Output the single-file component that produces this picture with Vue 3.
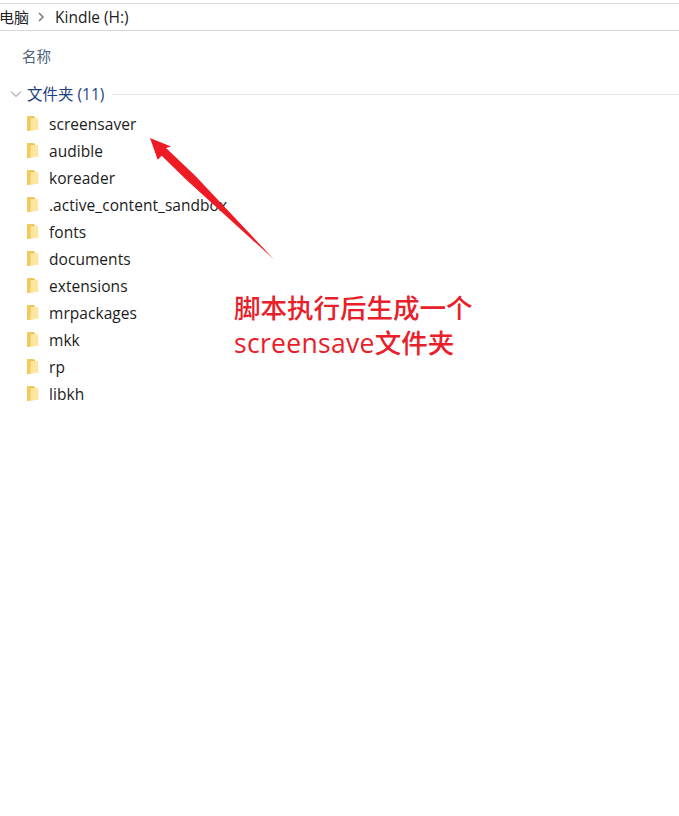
<script setup>
const folders = ['screensaver','audible','koreader','.active_content_sandbox','fonts','documents','extensions','mrpackages','mkk','rp','libkh']
</script>

<template>
  <div class="page">
    <div class="crumbs">
      <span class="pc">电脑</span>
      <svg class="sep" width="8" height="10" viewBox="0 0 8 10"><path d="M2 1l4 4-4 4" fill="none" stroke="#7a7a7a" stroke-width="1.500"/></svg>
      <span>Kindle (H:)</span>
    </div>
    <div class="col">名称</div>
    <div class="group">
      <svg class="chev" width="12" height="8" viewBox="0 0 12 8"><path d="M1 1.5l5 5 5-5" fill="none" stroke="#7f7f7f" stroke-width="1"/></svg>
      <span class="gname">文件夹 (11)</span>
      <span class="gline"></span>
    </div>
    <ul class="list">
      <li v-for="f in folders" :key="f" class="row">
        <svg class="folder" width="14" height="17" viewBox="0 0 14 17">
          <path d="M1 1h6l2 1v13l-8 1z" fill="#efc04e"/>
          <path d="M4.500 3h7.500l.5 12H4z" fill="#fde7a0"/>
          <path d="M1 1h5l1 1H4.500v12.500L1 16z" fill="#f2c95c"/>
        </svg>
        <span>{{ f }}</span>
      </li>
    </ul>
    <svg class="arrow" width="140" height="130" viewBox="0 0 140 130">
      <path d="M3 2L24 10.500 19 12 48 39.500 127 123.500 39 43.500 14.700 19.700 10.700 23.700z" fill="#ed1c24"/>
    </svg>
    <div class="note">脚本执行后生成一个<br><span class="latin">screensave</span>文件夹</div>
  </div>
</template>

<style scoped>
.page {
  position: relative;
  width: 679px;
  height: 816px;
  background: #fff;
  overflow: hidden;
  font-family: "Open Sans", "Noto Sans CJK SC", sans-serif;
  color: #1a1a1a;
}
.crumbs {
  margin-top: 3px;
  border-top: 1px solid #d9d9d9;
  border-bottom: 1px solid #d9d9d9;
  height: 26px;
  display: flex;
  align-items: center;
  font-size: 15.5px;
  line-height: 24px;
  color: #222;
}
.pc { margin-left: -1px; font-size: 15px; }
.sep { margin: 0 10px 0 8px; }
.col {
  margin: 16px 0 0 22px;
  height: 20px;
  line-height: 20px;
  font-size: 14.500px;
  color: #4c607a;
}
.group {
  margin-top: 17px;
  display: flex;
  align-items: center;
  height: 20px;
  font-size: 15.500px;
  padding-left: 10px;
  color: #1e3f7f;
}
.chev { margin-right: 5px; }
.gname { line-height: 18px; }
.gline {
  flex: 1;
  margin-left: 8px;
  height: 1px;
  background: #e3e3e3;
}
.list {
  list-style: none;
  margin: 6px 0 0;
  padding: 0;
}
.row {
  height: 27px;
  display: flex;
  align-items: center;
  padding-left: 26px;
  font-size: 15.500px;
  letter-spacing: 0.05px;
  color: #1c1c1c;
}
.folder { margin-right: 9px; flex: none; }
.arrow { position: absolute; left: 147px; top: 136px; }
.note {
  position: absolute;
  left: 234px;
  top: 291px;
  font-size: 26.500px;
  font-weight: 500;
  line-height: 35px;
  color: #e8202a;
  white-space: nowrap;
}
.latin { letter-spacing: 0.3px; }
</style>
